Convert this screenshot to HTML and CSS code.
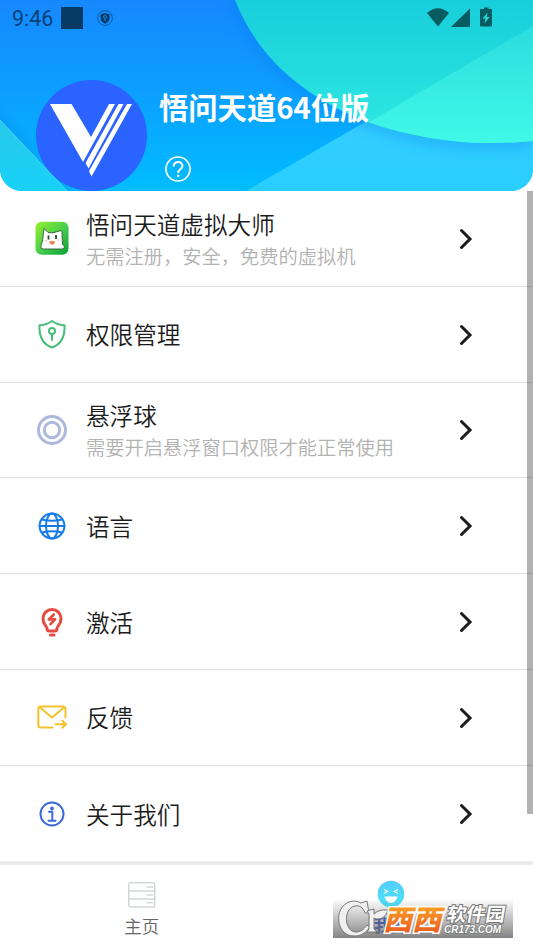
FILE: index.html
```html
<!DOCTYPE html>
<html lang="zh-CN">
<head>
<meta charset="utf-8">
<title>我的</title>
<link rel="stylesheet" href="styles.css">
</head>
<body>
<div class="app">
  <header class="hero">
    <svg class="hero-art" viewBox="0 0 533 191" aria-hidden="true">
      <defs>
        <linearGradient id="sky" x1="0" y1="0" x2="0" y2="1"><stop offset="0" stop-color="#1688ff"/><stop offset=".5" stop-color="#0ca0ff"/><stop offset="1" stop-color="#00bdff"/></linearGradient>
        <linearGradient id="teal" x1="0" y1="0" x2="0" y2="1"><stop offset="0" stop-color="#18cedb"/><stop offset="1" stop-color="#30eae2"/></linearGradient>
        <linearGradient id="mint" x1="0" y1="0" x2="0" y2="1"><stop offset="0" stop-color="#2cdce0"/><stop offset="1" stop-color="#42fae6"/></linearGradient>
        <linearGradient id="ice" x1="0" y1="0" x2="0" y2="1"><stop offset="0" stop-color="#46ceff"/><stop offset="1" stop-color="#28ceff"/></linearGradient>
        <linearGradient id="corner" x1="0" y1="0" x2="0" y2="1"><stop offset="0" stop-color="#28c8e8"/><stop offset="1" stop-color="#18d2fa"/></linearGradient>
        <clipPath id="bubble"><path d="M235 0C246 28 262 50 280 68C305 92 337 111 368 122C408 136 450 143 490 143Q512 143 533 141V0Z"/></clipPath>
        <filter id="soft" x="-20%" y="-20%" width="140%" height="140%"><feGaussianBlur stdDeviation="7"/></filter>
      </defs>
      <path fill="url(#sky)" d="M0 0H533V191H0Z"/>
      <path fill="url(#ice)" d="M246 191L533 25V191Z"/>
      <path fill="none" stroke="#0878ee" stroke-opacity=".42" stroke-width="10" filter="url(#soft)" d="M235 0C246 28 262 50 280 68C305 92 337 111 368 122C408 136 450 143 490 143Q512 143 533 141"/>
      <path fill="none" stroke="#0870d0" stroke-opacity=".3" stroke-width="10" filter="url(#soft)" d="M-10 110L78 202"/>
      <path fill="url(#corner)" stroke="#6fe2ff" stroke-opacity=".6" d="M-1 119L68 192H-1Z"/>
      <g clip-path="url(#bubble)">
        <path fill="url(#teal)" d="M230 0H533V143H230Z"/>
        <path fill="url(#mint)" d="M325 148L533 26V148Z"/>
      </g>
    </svg>
    <div class="status">
      <div class="status-left">
        <span class="clock">9:46</span><span class="block"></span>
        <svg width="16" height="16" viewBox="0 0 16 16"><circle cx="8" cy="8" r="7.4" fill="none" stroke="#08528c" stroke-width=".8"/><path fill="#083b68" d="M8 3L12.500 4.500V8Q12.500 11.500 8 13.700Q3.500 11.500 3.500 8V4.500Z"/><circle cx="8" cy="7" r="1.500" fill="none" stroke="#1788e8"/><path d="M8 8.500V11" stroke="#1788e8"/></svg>
      </div>
      <svg class="status-right" width="66" height="20" viewBox="0 0 66 20" fill="#085b60"><path d="M0 6Q11-3.500 22 6L11 19.500Z"/><path d="M43 1.500V20H24Z"/><path d="M57 .5H61.500V2H64Q65 2 65 3V18.500Q65 19.500 64 19.500H54Q53 19.500 53 18.500V3Q53 2 54 2H57Z"/><path fill="#25d8df" d="M60.500 5.500L55.500 11.500H58.500L57.500 16.500L62.500 10H59.500Z"/></svg>
    </div>
    <div class="profile">
      <svg class="avatar" width="111" height="111" viewBox="36 80 111 111"><circle cx="91.500" cy="135.500" r="55.500" fill="#2a63ff"/><path fill="#fff" d="M50 104H71.500L91 137L109 104H115L83 162ZM118.500 104H123.500L88.500 168.500L85.500 163ZM127 104H132L91.500 176.500L89 171Z"/></svg>
      <div class="profile-text">
        <h1>悟问天道64位版</h1>
        <svg class="help" width="26" height="26" viewBox="0 0 26 26" fill="none" stroke="#fff" stroke-width="1.700"><circle cx="13" cy="13" r="12"/><path stroke-width="2" d="M8.700 10.500C8.700 4.700 17.500 4.700 17.500 10C17.500 13 13.100 13 13.100 17"/><path stroke-width="2.200" d="M13.100 18.700V21"/></svg>
      </div>
    </div>
  </header>

  <main class="list">
    <div class="row">
      <svg class="icon" viewBox="0 0 34 34"><defs><linearGradient id="leaf" x2="1" y2="1"><stop stop-color="#96f22d"/><stop offset=".55" stop-color="#45cb4d"/><stop offset="1" stop-color="#099f35"/></linearGradient></defs><rect x=".5" y=".8" width="33" height="33" rx="6" fill="url(#leaf)"/><path d="M9 7.500L13 11.500Q17 12.500 21 11L26 9.500Q27 9.500 27 11.500L27.500 23.500Q31 25.500 28 28H8Q5 28 6 24.500Q8 20.500 8 15.500Z" fill="#fff" stroke="#315c39" stroke-width=".9"/><path d="M13.500 14.500V18.500M21 14V18" stroke="#244d35" stroke-width="1.800"/><path d="M14 20.500L17 19.800L20 20.500L19 23.500H15.500Z" fill="#f18157"/><path d="M9.500 19.500H12M22 19H24.500" stroke="#ffc0b2"/></svg>
      <div class="copy"><div class="name">悟问天道虚拟大师</div><div class="note">无需注册，安全，免费的虚拟机</div></div>
      <svg class="chevron" viewBox="0 0 14 22"><path d="M2.500 2.500L11 11L2.500 19.500"/></svg>
    </div>
    <div class="row">
      <svg class="icon line green" viewBox="0 0 34 34"><path d="M17 4C13 7 9 8 4.500 8.200C4 19 7 27 17 30.500C27 27 30 19 29.500 8.200C25 8 21 7 17 4Z"/><circle cx="17" cy="14" r="3"/><path d="M17 17V23"/></svg>
      <div class="copy"><div class="name">权限管理</div></div>
      <svg class="chevron" viewBox="0 0 14 22"><path d="M2.500 2.500L11 11L2.500 19.500"/></svg>
    </div>
    <div class="row">
      <svg class="icon orb" viewBox="0 0 34 34"><circle cx="17" cy="17" r="13.500"/><circle cx="17" cy="17" r="7.700"/></svg>
      <div class="copy"><div class="name">悬浮球</div><div class="note">需要开启悬浮窗口权限才能正常使用</div></div>
      <svg class="chevron" viewBox="0 0 14 22"><path d="M2.500 2.500L11 11L2.500 19.500"/></svg>
    </div>
    <div class="row">
      <svg class="icon line blue" viewBox="0 0 34 34"><circle cx="17" cy="17" r="12.400"/><ellipse cx="17" cy="17" rx="6" ry="12.400"/><path d="M4.500 17H29.500M7 10.500Q17 13 27 10.500M7 23.500Q17 21 27 23.500"/></svg>
      <div class="copy"><div class="name">语言</div></div>
      <svg class="chevron" viewBox="0 0 14 22"><path d="M2.500 2.500L11 11L2.500 19.500"/></svg>
    </div>
    <div class="row">
      <svg class="icon bulb" viewBox="0 0 34 34"><path d="M12 23.500C12 21 8 20 8 13.500A9 9 0 0 1 26 13.500C26 20 22 21 22 23.500Q22 26 20 26H14Q12 26 12 23.500Z"/><path class="bolt" d="M18.800 9.500L13.800 14.500L20.200 14.200L15.500 19.200"/><path d="M15.500 30H19"/></svg>
      <div class="copy"><div class="name">激活</div></div>
      <svg class="chevron" viewBox="0 0 14 22"><path d="M2.500 2.500L11 11L2.500 19.500"/></svg>
    </div>
    <div class="row">
      <svg class="icon line yellow" viewBox="0 0 34 34"><path d="M30.500 17.500V9Q30.500 6.500 28 6.500H5.800Q3.300 6.500 3.300 9V25Q3.300 27.500 5.800 27.500H17.500M5 7.500L17 17.500L29 7.500M20.500 24.200H31M27.300 20.700L31 24.200L27.300 27.800"/></svg>
      <div class="copy"><div class="name">反馈</div></div>
      <svg class="chevron" viewBox="0 0 14 22"><path d="M2.500 2.500L11 11L2.500 19.500"/></svg>
    </div>
    <div class="row last">
      <svg class="icon line royal" viewBox="0 0 34 34"><circle cx="17" cy="17" r="11.500"/><path d="M14 14.800H17.300V23.500M13.500 23.800H20.500"/><circle cx="17" cy="11.500" r=".9"/></svg>
      <div class="copy"><div class="name">关于我们</div></div>
      <svg class="chevron" viewBox="0 0 14 22"><path d="M2.500 2.500L11 11L2.500 19.500"/></svg>
    </div>
    <div class="scrollbar"></div>
  </main>

  <nav class="tabs">
    <div class="tab">
      <svg width="28" height="26" viewBox="0 0 28 26" fill="none" stroke="#bbc4cc"><rect x=".8" y=".8" width="26" height="24.200" rx="1.200"/><path d="M1 9H27M1 17H27M18.500 5H25M18.500 13H25M18.500 20.800H25"/></svg>
      <span>主页</span>
    </div>
    <div class="tab active">
      <svg width="28" height="28" viewBox="0 0 28 28"><defs><linearGradient id="face" x2="0" y2="1"><stop stop-color="#55cdfb"/><stop offset="1" stop-color="#48e4fa"/></linearGradient></defs><circle cx="14" cy="14" r="13.300" fill="url(#face)"/><path d="M7 9.500L10.500 11.500L7 13.500M21 9.500L17.500 11.500L21 13.500" fill="none" stroke="#fff" stroke-width="1.300"/><path d="M7.500 16.500H20.500Q19 23 14 23Q9 23 7.500 16.500Z" fill="#fff"/></svg>
      <span>我的</span>
    </div>
    <svg class="watermark" width="180" height="39" viewBox="0 0 180 39">
      <defs><linearGradient id="shade" x2="0" y2="1"><stop stop-color="#777" stop-opacity="0"/><stop offset="1" stop-color="#777" stop-opacity=".9"/></linearGradient><linearGradient id="orange" x2="0" y2="1"><stop stop-color="#ffb52a"/><stop offset="1" stop-color="#e9511e"/></linearGradient></defs>
      <path fill="url(#shade)" d="M0 0H180V39H0Z"/>
      <g class="mark-outline"><path d="M28 4L34 2L36 14H32C30 8 26 6 22 7C10 9 11 33 23 33C28 33 31 30 34 26L37 28C32 35 27 37 21 37C1 37 0 3 21 2Q25 2 28 4Z"/><path d="M34 12L41 10V15Q46 10 55 11Q52 21 43 20L41 19V30L44 33H34L36 30V15Z"/></g>
      <g transform="translate(50 31) skewX(-14)"><text class="xixi" x="0" y="0" textLength="58" lengthAdjust="spacingAndGlyphs">西西</text></g>
      <g transform="translate(113 22) skewX(-10)"><text class="soft" x="0" y="0" textLength="58" lengthAdjust="spacingAndGlyphs">软件园</text></g>
      <text class="domain" x="111" y="34" textLength="57" lengthAdjust="spacingAndGlyphs">CR173.COM</text>
    </svg>
  </nav>
</div>
</body>
</html>
```
FILE: styles.css
```css
* { box-sizing: border-box; }
body {
  margin: 0;
  background: #fff;
  color: #1c1c1c;
  font-family: "Noto Sans CJK SC", sans-serif;
}
.app { display: flex; flex-direction: column; height: 948px; overflow: hidden; }
.hero {
  position: relative;
  height: 191px;
  flex: none;
  overflow: hidden;
  border-radius: 0 0 22px 22px;
}
.hero-art { position: absolute; inset: 0; width: 533px; height: 191px; }
.status {
  position: relative;
  display: flex;
  justify-content: space-between;
  height: 80px;
  padding: 7px 40px 0 12px;
}
.status-left { display: flex; align-items: center; height: 22px; }
.clock { width: 49px; padding-top: 2px; color: #084276; font: 400 21.500px/22px Roboto, sans-serif; }
.block { width: 22px; height: 22px; margin-right: 14px; background: #073b66; }
.profile { position: relative; display: flex; padding-left: 36px; }
.avatar { flex: none; }
.profile-text { padding-left: 12px; }
h1 { margin: 5px 0 0; color: #fff; font-size: 29.300px; font-weight: 700; line-height: 42px; white-space: nowrap; }
.help { display: block; margin: 29px 0 0 6px; }

.list { position: relative; height: 670px; flex: none; }
.row {
  display: flex;
  align-items: center;
  height: 95.800px;
  padding: 0 60px 0 35px;
  border-bottom: 1px solid #e0e0e0;
}
.row.last { border-bottom: 0; }
.icon { width: 34px; height: 34px; flex: none; }
.copy { flex: 1; padding-left: 17px; white-space: nowrap; }
.name { font-size: 23.600px; line-height: 34px; font-weight: 350; }
.note { color: #b2b2b2; font-size: 19.250px; line-height: 30px; font-weight: 350; }
.name:first-child:not(:last-child) { padding-top: 1px; }
.chevron { width: 14px; height: 22px; margin-top: 1px; fill: none; stroke: #1c1c1c; stroke-width: 3; stroke-linecap: round; }
.line { fill: none; stroke-width: 2; stroke-linecap: round; stroke-linejoin: round; }
.green { stroke: #46bd79; }
.blue { stroke: #157be8; }
.yellow { stroke: #f5c22b; }
.royal { stroke: #3a6add; }
.orb { fill: none; stroke: #acb8dc; stroke-width: 3; }
.bulb { fill: none; stroke: #e64b40; stroke-width: 3; stroke-linecap: round; stroke-linejoin: round; }
.bulb .bolt { stroke-width: 2.600; }
.scrollbar { position: absolute; top: 0; right: 0; width: 6px; height: 623px; background: rgba(0, 0, 0, .3); }

.tabs {
  position: relative;
  display: flex;
  height: 87px;
  padding: 0 17px;
  border-top: 4px solid #ebebeb;
}
.tab { display: flex; flex: 1; flex-direction: column; align-items: center; padding-top: 17px; color: #666; }
.tab span { font-size: 17.500px; line-height: 26px; margin-top: 5px; font-weight: 350; }
.tab.active { padding-top: 15px; color: #1743c4; }
.tab.active span { margin-top: 4px; font-weight: 700; }
.watermark { position: absolute; top: 34px; left: 333px; }
.mark-outline { fill: #f0f0f0; stroke: #777; stroke-width: 1; }
.xixi { fill: url(#orange); stroke: #fff; stroke-width: 3; paint-order: stroke; font-size: 28px; font-weight: 900; }
.soft { fill: #fff; stroke: #777; stroke-width: 2; paint-order: stroke; font-size: 19px; font-weight: 700; }
.domain { fill: #fff; stroke: #777; stroke-width: 1.500; paint-order: stroke; font: italic 700 10px "Liberation Sans", sans-serif; }
```
